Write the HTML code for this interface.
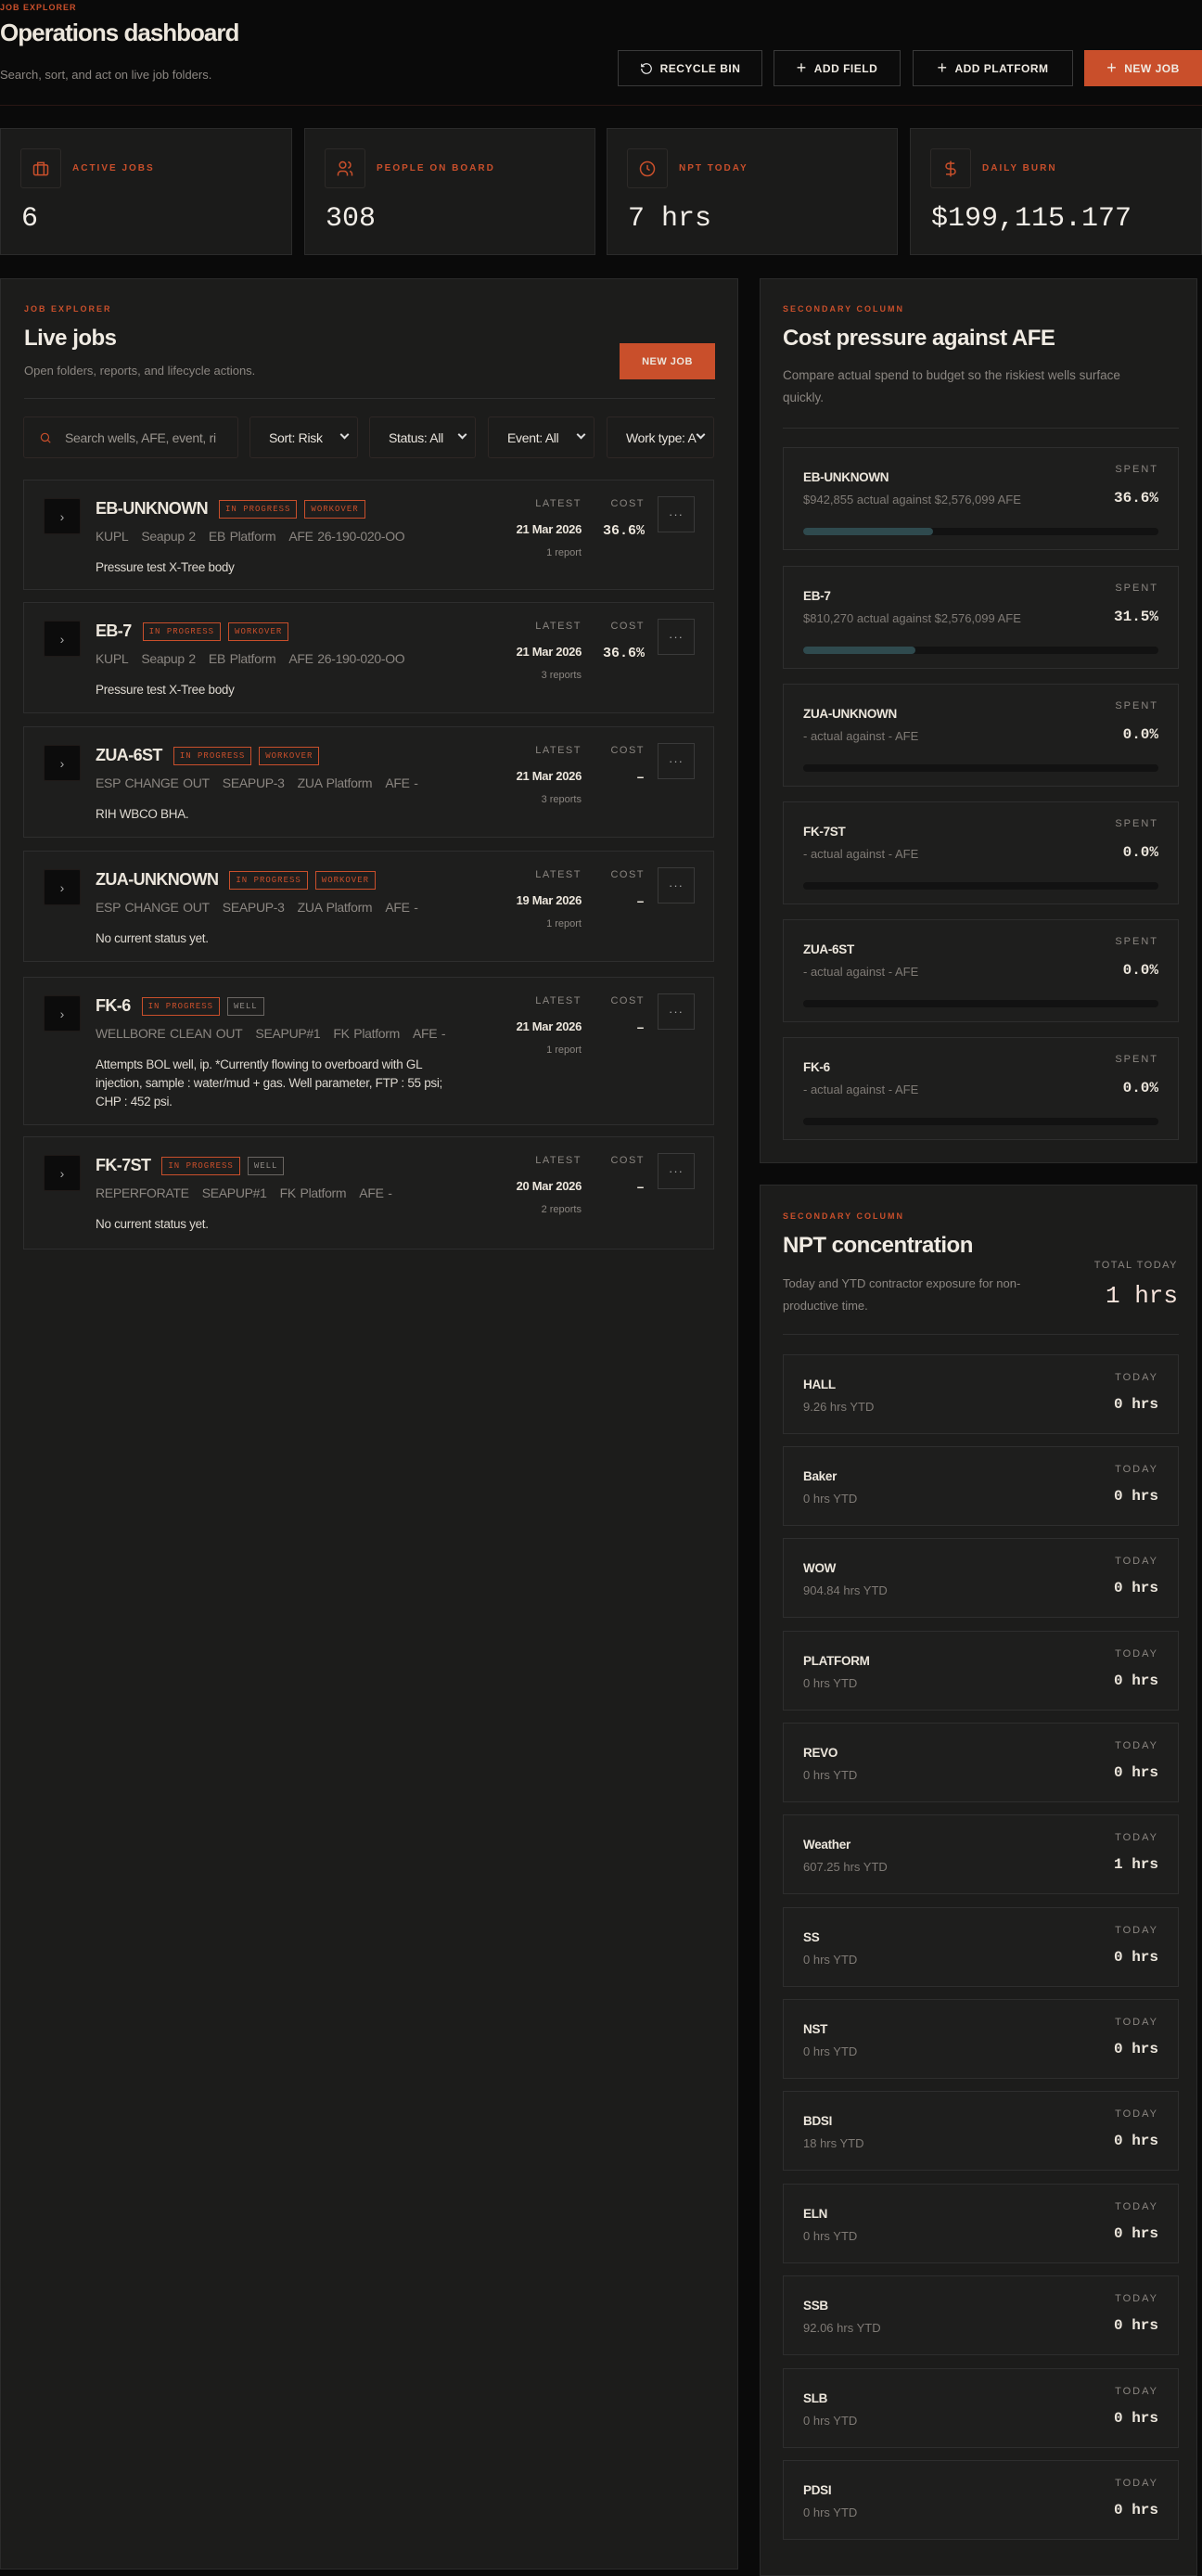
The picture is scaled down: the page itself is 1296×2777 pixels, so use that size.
<!DOCTYPE html>
<html><head><meta charset="utf-8"><style>
*{box-sizing:border-box;margin:0;padding:0}
body{width:1296px;height:2763px;background:#0a0a0a;font-family:"Liberation Sans",sans-serif;color:#ece6dc;position:relative;overflow:hidden}
.abs{position:absolute}
.kick{font-size:9px;font-weight:bold;letter-spacing:2px;color:#c94f2b}
.btn{position:absolute;top:54px;height:39px;border:1px solid #3a3a3a;background:#0c0c0c;color:#f0ebe3;font-size:12px;font-weight:bold;letter-spacing:.5px;display:flex;align-items:center;justify-content:center;gap:8px}
.stat{position:absolute;top:138px;height:137px;background:#1b1b1a;border:1px solid #2b2b2b}
.stat .ib{position:absolute;left:21px;top:21px;width:44px;height:43px;border:1px solid #2d2a28;border-radius:3px;display:flex;align-items:center;justify-content:center}
.stat .lb{position:absolute;left:77px;top:37px;font-size:10px;font-weight:bold;letter-spacing:2px;color:#c94f2b}
.stat .v{position:absolute;left:22px;top:80px;font-family:"Liberation Mono",monospace;font-size:30px;color:#f2eee8}
.panel{position:absolute;background:#1c1c1b;border:1px solid #2b2b2b}
.ph{font-size:24px;font-weight:bold;letter-spacing:-.5px;color:#f0ebe3}
.sub{font-size:13px;color:#8b8681}
.filt{position:absolute;top:449px;height:45px;border:1px solid #2e2725;border-radius:3px;background:#1c1c1b;display:flex;align-items:center;font-size:14px;color:#e8e3dc;letter-spacing:-.3px}
.filt .ch{position:absolute;right:10px;top:15px;width:7px;height:7px;border-right:2px solid #ddd;border-bottom:2px solid #ddd;transform:rotate(45deg)}
.job{position:absolute;left:25px;width:745px;background:#1e1e1d;border:1px solid #2e2e2e}
.job .arr{position:absolute;left:21px;top:19px;width:40px;height:39px;background:#0c0c0c;border:1px solid #1f1a18;border-radius:2px;color:#aaa;font-size:14px;display:flex;align-items:center;justify-content:center}
.job .nm{position:absolute;left:77px;top:20px;display:flex;align-items:center;gap:8px}
.job .nm b{font-size:18px;letter-spacing:-.6px;margin-right:4px}
.tag{font-family:"Liberation Mono",monospace;font-size:9px;letter-spacing:1px;border:1px solid #c94f2b;color:#c94f2b;padding:4px 6px}
.tag.g{border-color:#6a6662;color:#8f8a85}
.job .meta{position:absolute;left:77px;top:52px;font-size:14px;color:#8b8681;letter-spacing:-.3px;word-spacing:1px}
.job .meta span{margin-right:14px}
.job .ds{position:absolute;left:77px;top:84px;width:395px;font-size:13.5px;color:#ddd8d0;line-height:20px;letter-spacing:-.3px}
.job .lt{position:absolute;right:142px;top:19px;text-align:right}
.job .ct{position:absolute;right:74px;top:19px;text-align:right}
.lab{font-size:11px;letter-spacing:1.5px;color:#8b8681}
.job .dt{font-size:13px;font-weight:bold;margin-top:14px;letter-spacing:-.3px}
.job .rp{font-size:11px;color:#8b8681;margin-top:12px}
.job .cv{font-family:"Liberation Mono",monospace;font-size:15px;font-weight:bold;margin-top:15px}
.job .dots{position:absolute;right:20px;top:17px;width:40px;height:39px;border:1px solid #3a3a3a;color:#aaa;font-size:13px;display:flex;align-items:center;justify-content:center;letter-spacing:1px}
.cc{position:absolute;left:24px;width:427px;background:#1e1e1d;border:1px solid #2e2e2e}
.cc .n{position:absolute;left:21px;top:24px;font-size:13.5px;font-weight:bold;letter-spacing:-.3px}
.cc .s{position:absolute;left:21px;top:48px;font-size:13px;color:#7f7a75}
.cc .l{position:absolute;right:21px;top:17px;font-size:11px;letter-spacing:2px;color:#8b8681}
.cc .v{position:absolute;right:21px;top:45px;font-family:"Liberation Mono",monospace;font-size:16px;font-weight:bold}
.cc .bar{position:absolute;left:21px;right:21px;top:86px;height:8px;background:#121212;border-radius:4px}
.cc .bar i{position:absolute;left:0;top:0;bottom:0;background:#2f4a4e;border-radius:4px}
.nr{position:absolute;left:24px;width:427px;height:86px;background:#1e1e1d;border:1px solid #2e2e2e}
.nr .n{position:absolute;left:21px;top:24px;font-size:13.5px;font-weight:bold;letter-spacing:-.3px}
.nr .s{position:absolute;left:21px;top:48px;font-size:13px;color:#7f7a75}
.nr .l{position:absolute;right:21px;top:18px;font-size:11px;letter-spacing:2px;color:#8b8681}
.nr .v{position:absolute;right:21px;top:44px;font-family:"Liberation Mono",monospace;font-size:16px;font-weight:bold}
</style></head><body>

<div class="abs kick" style="left:0;top:3px;letter-spacing:1px">JOB EXPLORER</div>
<div class="abs" style="left:0;top:20px;font-size:26px;font-weight:bold;letter-spacing:-1px">Operations dashboard</div>
<div class="abs sub" style="left:0;top:73px;font-size:13px">Search, sort, and act on live job folders.</div>

<div class="btn" style="left:666px;width:156px"><svg width="14" height="14" viewBox="0 0 24 24" fill="none" stroke="#eee" stroke-width="2"><path d="M3 12a9 9 0 1 0 3-6.7L3 8"/><path d="M3 3v5h5"/></svg>RECYCLE BIN</div>
<div class="btn" style="left:834px;width:137px"><span style="font-size:18px;font-weight:normal">+</span>ADD FIELD</div>
<div class="btn" style="left:984px;width:173px"><span style="font-size:18px;font-weight:normal">+</span>ADD PLATFORM</div>
<div class="btn" style="left:1169px;width:127px;background:#c94f2b;border-color:#c94f2b"><span style="font-size:18px;font-weight:normal">+</span>NEW JOB</div>
<div class="abs" style="left:0;top:113px;width:1296px;height:1px;background:#2a1714"></div>

<div class="stat" style="left:0;width:315px"><div class="ib"><svg width="20" height="20" viewBox="0 0 24 24" fill="none" stroke="#c94f2b" stroke-width="1.8"><rect x="3" y="7" width="18" height="13" rx="2"/><path d="M8 7V4h8v3M8 7v13M16 7v13"/></svg></div><div class="lb">ACTIVE JOBS</div><div class="v">6</div></div>
<div class="stat" style="left:328px;width:314px"><div class="ib"><svg width="20" height="20" viewBox="0 0 24 24" fill="none" stroke="#c94f2b" stroke-width="1.8"><circle cx="9" cy="7" r="4"/><path d="M3 21v-2a4 4 0 0 1 4-4h4a4 4 0 0 1 4 4v2M16 3.1a4 4 0 0 1 0 7.8M21 21v-2a4 4 0 0 0-3-3.9"/></svg></div><div class="lb">PEOPLE ON BOARD</div><div class="v">308</div></div>
<div class="stat" style="left:654px;width:314px"><div class="ib"><svg width="20" height="20" viewBox="0 0 24 24" fill="none" stroke="#c94f2b" stroke-width="1.8"><circle cx="12" cy="12" r="9"/><path d="M12 7v5l3 2"/></svg></div><div class="lb">NPT TODAY</div><div class="v">7 hrs</div></div>
<div class="stat" style="left:981px;width:315px"><div class="ib"><svg width="20" height="20" viewBox="0 0 24 24" fill="none" stroke="#c94f2b" stroke-width="1.8"><path d="M12 2v20M17 5H9.5a3.5 3.5 0 0 0 0 7h5a3.5 3.5 0 0 1 0 7H6"/></svg></div><div class="lb">DAILY BURN</div><div class="v">$199,115.177</div></div>

<div class="panel" style="left:0;top:300px;width:796px;height:2470px">
  <div class="abs kick" style="left:25px;top:27px">JOB EXPLORER</div>
  <div class="abs ph" style="left:25px;top:50px">Live jobs</div>
  <div class="abs sub" style="left:25px;top:91px">Open folders, reports, and lifecycle actions.</div>
  <div class="abs" style="left:667px;top:69px;width:103px;height:39px;background:#c94f2b;font-size:11px;font-weight:bold;letter-spacing:.5px;display:flex;align-items:center;justify-content:center">NEW JOB</div>
  <div class="abs" style="left:25px;top:128px;width:745px;height:1px;background:#2e2e2e"></div>
</div>
<div class="filt" style="left:25px;width:232px;padding-left:16px;color:#9a958f"><svg width="14" height="14" viewBox="0 0 24 24" fill="none" stroke="#c94f2b" stroke-width="2"><circle cx="11" cy="11" r="7"/><path d="M16 16l5 5"/></svg><span style="margin-left:14px">Search wells, AFE, event, ri</span></div>
<div class="filt" style="left:269px;width:117px;padding-left:20px">Sort: Risk<i class="ch"></i></div>
<div class="filt" style="left:398px;width:115px;padding-left:20px">Status: All<i class="ch"></i></div>
<div class="filt" style="left:526px;width:115px;padding-left:20px">Event: All<i class="ch"></i></div>
<div class="filt" style="left:654px;width:116px;padding-left:20px;overflow:hidden"><span style="white-space:nowrap">Work type: A</span><i class="ch"></i></div>

<div class="job" style="top:517px;height:119px"><div class="arr">›</div><div class="nm"><b>EB-UNKNOWN</b><span class="tag">IN PROGRESS</span><span class="tag">WORKOVER</span></div><div class="meta"><span>KUPL</span><span>Seapup 2</span><span>EB Platform</span><span>AFE 26-190-020-OO</span></div><div class="ds">Pressure test X-Tree body</div><div class="lt"><div class="lab">LATEST</div><div class="dt">21 Mar 2026</div><div class="rp">1 report</div></div><div class="ct"><div class="lab">COST</div><div class="cv">36.6%</div></div><div class="dots">···</div></div>
<div class="job" style="top:649px;height:120px"><div class="arr">›</div><div class="nm"><b>EB-7</b><span class="tag">IN PROGRESS</span><span class="tag">WORKOVER</span></div><div class="meta"><span>KUPL</span><span>Seapup 2</span><span>EB Platform</span><span>AFE 26-190-020-OO</span></div><div class="ds">Pressure test X-Tree body</div><div class="lt"><div class="lab">LATEST</div><div class="dt">21 Mar 2026</div><div class="rp">3 reports</div></div><div class="ct"><div class="lab">COST</div><div class="cv">36.6%</div></div><div class="dots">···</div></div>
<div class="job" style="top:783px;height:120px"><div class="arr">›</div><div class="nm"><b>ZUA-6ST</b><span class="tag">IN PROGRESS</span><span class="tag">WORKOVER</span></div><div class="meta"><span>ESP CHANGE OUT</span><span>SEAPUP-3</span><span>ZUA Platform</span><span>AFE -</span></div><div class="ds">RIH WBCO BHA.</div><div class="lt"><div class="lab">LATEST</div><div class="dt">21 Mar 2026</div><div class="rp">3 reports</div></div><div class="ct"><div class="lab">COST</div><div class="cv">–</div></div><div class="dots">···</div></div>
<div class="job" style="top:917px;height:120px"><div class="arr">›</div><div class="nm"><b>ZUA-UNKNOWN</b><span class="tag">IN PROGRESS</span><span class="tag">WORKOVER</span></div><div class="meta"><span>ESP CHANGE OUT</span><span>SEAPUP-3</span><span>ZUA Platform</span><span>AFE -</span></div><div class="ds">No current status yet.</div><div class="lt"><div class="lab">LATEST</div><div class="dt">19 Mar 2026</div><div class="rp">1 report</div></div><div class="ct"><div class="lab">COST</div><div class="cv">–</div></div><div class="dots">···</div></div>
<div class="job" style="top:1053px;height:160px"><div class="arr">›</div><div class="nm"><b>FK-6</b><span class="tag">IN PROGRESS</span><span class="tag g">WELL</span></div><div class="meta"><span>WELLBORE CLEAN OUT</span><span>SEAPUP#1</span><span>FK Platform</span><span>AFE -</span></div><div class="ds">Attempts BOL well, ip. *Currently flowing to overboard with GL injection, sample : water/mud + gas. Well parameter, FTP : 55 psi; CHP : 452 psi.</div><div class="lt"><div class="lab">LATEST</div><div class="dt">21 Mar 2026</div><div class="rp">1 report</div></div><div class="ct"><div class="lab">COST</div><div class="cv">–</div></div><div class="dots">···</div></div>
<div class="job" style="top:1225px;height:122px"><div class="arr">›</div><div class="nm"><b>FK-7ST</b><span class="tag">IN PROGRESS</span><span class="tag g">WELL</span></div><div class="meta"><span>REPERFORATE</span><span>SEAPUP#1</span><span>FK Platform</span><span>AFE -</span></div><div class="ds">No current status yet.</div><div class="lt"><div class="lab">LATEST</div><div class="dt">20 Mar 2026</div><div class="rp">2 reports</div></div><div class="ct"><div class="lab">COST</div><div class="cv">–</div></div><div class="dots">···</div></div>

<div class="panel" style="left:819px;top:300px;width:472px;height:954px">
  <div class="abs kick" style="left:24px;top:27px">SECONDARY COLUMN</div>
  <div class="abs ph" style="left:24px;top:50px">Cost pressure against AFE</div>
  <div class="abs sub" style="left:24px;top:92px;width:395px;line-height:24px;font-size:13.5px">Compare actual spend to budget so the riskiest wells surface quickly.</div>
  <div class="abs" style="left:24px;top:160px;width:427px;height:1px;background:#2e2e2e"></div>
  <div class="cc" style="top:181px;height:111px"><div class="n">EB-UNKNOWN</div><div class="s">$942,855 actual against $2,576,099 AFE</div><div class="l">SPENT</div><div class="v">36.6%</div><div class="bar"><i style="width:36.6%"></i></div></div>
  <div class="cc" style="top:309px;height:111px"><div class="n">EB-7</div><div class="s">$810,270 actual against $2,576,099 AFE</div><div class="l">SPENT</div><div class="v">31.5%</div><div class="bar"><i style="width:31.5%"></i></div></div>
  <div class="cc" style="top:436px;height:111px"><div class="n">ZUA-UNKNOWN</div><div class="s">- actual against - AFE</div><div class="l">SPENT</div><div class="v">0.0%</div><div class="bar"></div></div>
  <div class="cc" style="top:563px;height:111px"><div class="n">FK-7ST</div><div class="s">- actual against - AFE</div><div class="l">SPENT</div><div class="v">0.0%</div><div class="bar"></div></div>
  <div class="cc" style="top:690px;height:111px"><div class="n">ZUA-6ST</div><div class="s">- actual against - AFE</div><div class="l">SPENT</div><div class="v">0.0%</div><div class="bar"></div></div>
  <div class="cc" style="top:817px;height:111px"><div class="n">FK-6</div><div class="s">- actual against - AFE</div><div class="l">SPENT</div><div class="v">0.0%</div><div class="bar"></div></div>
</div>

<div class="panel" style="left:819px;top:1277px;width:472px;height:1500px">
  <div class="abs kick" style="left:24px;top:28px">SECONDARY COLUMN</div>
  <div class="abs ph" style="left:24px;top:51px">NPT concentration</div>
  <div class="abs sub" style="left:24px;top:94px;width:290px;line-height:24px">Today and YTD contractor exposure for non-productive time.</div>
  <div class="abs lab" style="right:20px;top:80px">TOTAL TODAY</div>
  <div class="abs" style="right:20px;top:104px;font-family:'Liberation Mono',monospace;font-size:26px;color:#f7e4dc">1 hrs</div>
  <div class="abs" style="left:24px;top:160px;width:427px;height:1px;background:#2e2e2e"></div>
  <div class="nr" style="top:182px"><div class="n">HALL</div><div class="s">9.26 hrs YTD</div><div class="l">TODAY</div><div class="v">0 hrs</div></div>
  <div class="nr" style="top:281px"><div class="n">Baker</div><div class="s">0 hrs YTD</div><div class="l">TODAY</div><div class="v">0 hrs</div></div>
  <div class="nr" style="top:380px"><div class="n">WOW</div><div class="s">904.84 hrs YTD</div><div class="l">TODAY</div><div class="v">0 hrs</div></div>
  <div class="nr" style="top:480px"><div class="n">PLATFORM</div><div class="s">0 hrs YTD</div><div class="l">TODAY</div><div class="v">0 hrs</div></div>
  <div class="nr" style="top:579px"><div class="n">REVO</div><div class="s">0 hrs YTD</div><div class="l">TODAY</div><div class="v">0 hrs</div></div>
  <div class="nr" style="top:678px"><div class="n">Weather</div><div class="s">607.25 hrs YTD</div><div class="l">TODAY</div><div class="v">1 hrs</div></div>
  <div class="nr" style="top:778px"><div class="n">SS</div><div class="s">0 hrs YTD</div><div class="l">TODAY</div><div class="v">0 hrs</div></div>
  <div class="nr" style="top:877px"><div class="n">NST</div><div class="s">0 hrs YTD</div><div class="l">TODAY</div><div class="v">0 hrs</div></div>
  <div class="nr" style="top:976px"><div class="n">BDSI</div><div class="s">18 hrs YTD</div><div class="l">TODAY</div><div class="v">0 hrs</div></div>
  <div class="nr" style="top:1076px"><div class="n">ELN</div><div class="s">0 hrs YTD</div><div class="l">TODAY</div><div class="v">0 hrs</div></div>
  <div class="nr" style="top:1175px"><div class="n">SSB</div><div class="s">92.06 hrs YTD</div><div class="l">TODAY</div><div class="v">0 hrs</div></div>
  <div class="nr" style="top:1275px"><div class="n">SLB</div><div class="s">0 hrs YTD</div><div class="l">TODAY</div><div class="v">0 hrs</div></div>
  <div class="nr" style="top:1374px"><div class="n">PDSI</div><div class="s">0 hrs YTD</div><div class="l">TODAY</div><div class="v">0 hrs</div></div>
</div>
</body></html>
